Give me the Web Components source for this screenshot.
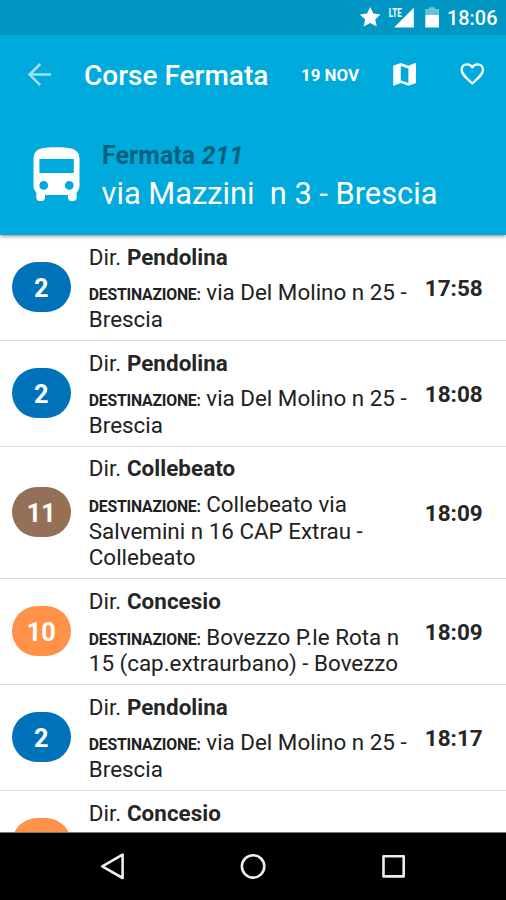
<!DOCTYPE html>
<html lang="it">
<head>
<meta charset="utf-8">
<title>Corse Fermata</title>
<style>
html,body{margin:0;padding:0}
body{width:506px;height:900px;overflow:hidden;background:#fff;font-family:Roboto,"Noto Sans",sans-serif;color:#212121}
</style>
</head>
<body>
<transit-app></transit-app>
<script>
const define=(name,html)=>customElements.define(name,class extends HTMLElement{
  constructor(){
    super();
    const t=document.createElement('template');
    t.innerHTML=html;
    this.attachShadow({mode:'open'}).append(t.content.cloneNode(true));
  }
});

define('status-bar',`
<style>
:host{display:flex;box-sizing:border-box;height:35px;background:#0097c4;color:#fff;align-items:center;justify-content:flex-end;padding-right:8px}
svg{display:block;flex:none}
span{font-size:19.9px;line-height:35px;font-weight:500;width:51px;white-space:nowrap;padding-top:2px}
</style>
<svg width="92" height="35" viewBox="355 0 92 35">
  <path fill="#fff" d="M370.2 7l3.1 6.600 7.200 1-5.300 4.800 1.600 7.200-6.600-3.700-6.600 3.700 1.600-7.200-5.300-4.800 7.200-1z"/>
  <text x="388.700" y="17" font-size="12.200" font-weight="700" fill="#fff" textLength="13" lengthAdjust="spacingAndGlyphs">LTE</text>
  <path fill="#fff" d="M413.8 7.800v19.800h-19.800z"/>
  <path fill="#66c1dd" d="M425.3 9h3.600V7.300h6.100V9h4v6h-13.700z"/>
  <path fill="#fff" d="M425.3 15H439v12.500h-13.700z"/>
</svg>
<span>18:06</span>`);

define('app-toolbar',`
<style>
:host{display:flex;height:80px;align-items:center;color:#fff}
svg{display:block;flex:none}
h1{margin:0;font-size:28px;font-weight:500;width:217px;line-height:36px;white-space:nowrap;padding-top:2px}
time{font-size:16.900px;font-weight:700;width:81px;line-height:24px;white-space:nowrap}
</style>
<svg width="84" height="80" viewBox="0 35 84 80"><path d="M51 74.600H29.800M40.200 64L29.600 74.600l10.600 10.600" fill="none" stroke="#a6e0f4" stroke-width="2.500"/></svg>
<h1>Corse Fermata</h1>
<time>19 NOV</time>
<svg width="124" height="80" viewBox="382 35 124 80">
  <path fill="#fff" fill-rule="evenodd" d="M415.400 63l-.2.1-6.800 2.600-7.600-2.700-7.100 2.400c-.3.1-.5.3-.5.6v19.100c0 .4.3.6.6.6l.2-.1 6.800-2.500 7.600 2.600 7.100-2.400c.3-.1.5-.3.5-.6V63.600c0-.4-.3-.6-.6-.6zm-7 20.100l-7.600-2.700V65.900l7.600 2.700z"/>
  <path fill="none" stroke="#fff" stroke-width="2.300" stroke-linejoin="round" d="M472.300 83.400l-1.600-1.400C465.200 77 461.600 73.800 461.600 69.800c0-3.100 2.400-5.500 5.500-5.500 2.100 0 4.200 1.200 5.200 3.100 1-1.900 3.100-3.100 5.200-3.100 3.100 0 5.500 2.400 5.500 5.500 0 4-3.600 7.200-9.100 12.200z"/>
</svg>`);

define('stop-banner',`
<style>
:host{display:flex;height:120px;color:#fff}
svg{display:block;flex:none}
div{padding-top:24px}
p{margin:0;white-space:pre}
.k{font-size:24.900px;line-height:34px;font-weight:700;color:#00617e}
.n{font-size:30.800px;line-height:41px;margin-left:-.5px}
::slotted(span){letter-spacing:.1px}
</style>
<svg width="102" height="119" viewBox="0 115 102 119"><path fill="#fff" fill-rule="evenodd" d="M56.500 147.300c-15.500 0-23 1.800-23 11.500v27.300c0 2.500 1.100 4.700 2.800 6.300v5.200c0 1.900 1.200 3.500 3.200 3.500h2.300c2 0 3.200-1.600 3.200-3.500v-2.500h23v2.500c0 1.900 1.200 3.500 3.200 3.500h2.300c2 0 3.200-1.600 3.200-3.500v-5.200c1.700-1.600 2.800-3.800 2.800-6.300v-27.300c0-9.700-8.500-11.500-23-11.500zM39.400 159h34.400v14H39.400zM43.700 181a4.400 4.400 0 1 1 0 8.800a4.400 4.400 0 0 1 0-8.800zM69.300 181a4.400 4.400 0 1 1 0 8.800a4.400 4.400 0 0 1 0-8.800z"/></svg>
<div><p class="k"><slot name="code"></slot></p><p class="n"><slot></slot></p></div>`);

define('trip-row',`
<style>
:host{display:grid;grid-template-columns:88.800px 323px 94px;box-sizing:border-box;border-bottom:1.500px solid #dcdcdc;height:105.900px;flex:none}
.badge{align-self:center;margin-left:11.700px;margin-bottom:1px;width:59.300px;height:49.500px;border-radius:25px;background:var(--line,#0072b9);color:#fff;font-weight:700;font-size:25.300px;line-height:53.500px;text-align:center}
.text{padding-top:8.700px;font-size:22.400px;line-height:26.500px}
.dir{height:26px;margin-bottom:9.700px;white-space:nowrap;letter-spacing:.05px}
.dir b{color:#262626}
.label{font-size:15.800px;font-weight:700;line-height:16px;letter-spacing:-.22px}
.time{align-self:center;font-size:22.500px;font-weight:700;color:#262626;padding:1px 0 0 13px;line-height:28px}
</style>
<div class="badge"><slot name="line"></slot></div>
<div class="text"><div class="dir">Dir. <b><slot name="dir"></slot></b></div><div><span class="label">DESTINAZIONE:</span> <slot></slot></div></div>
<div class="time"><slot name="time"></slot></div>`);

define('nav-bar',`
<style>:host{display:block;height:67px;background:#000;border-top:1px solid #777}svg{display:block}</style>
<svg width="506" height="67" viewBox="0 833 506 67" fill="none" stroke="#eee" stroke-width="2.600" stroke-linejoin="round">
  <path d="M122.600 854.700v23.300l-20.300-11.600z"/><circle cx="253.100" cy="866.400" r="11.200"/><rect x="383.500" y="856.200" width="20.200" height="20.200"/>
</svg>`);

define('transit-app',`
<style>
:host{display:flex;flex-direction:column;width:506px;height:900px}
header{background:#00aadd;height:200px;flex:none;box-shadow:0 1px 4px rgba(0,0,0,.5);clip-path:inset(0 0 -8px 0);z-index:1}
status-bar,nav-bar{flex:none}
main{flex:1;overflow:hidden;display:flex;flex-direction:column;min-height:0}
.three{height:132.400px}
</style>
<status-bar></status-bar>
<header>
  <app-toolbar></app-toolbar>
  <stop-banner><span slot="code">Fermata <i>211</i></span>via Mazzini&nbsp; n 3 - Brescia</stop-banner>
</header>
<main>
  <trip-row><span slot="line">2</span><span slot="dir">Pendolina</span>via Del Molino n 25 - Brescia<span slot="time">17:58</span></trip-row>
  <trip-row><span slot="line">2</span><span slot="dir">Pendolina</span>via Del Molino n 25 - Brescia<span slot="time">18:08</span></trip-row>
  <trip-row class="three" style="--line:#937056"><span slot="line">11</span><span slot="dir">Collebeato</span>Collebeato via Salvemini n 16 CAP Extrau - Collebeato<span slot="time">18:09</span></trip-row>
  <trip-row style="--line:#ff9248"><span slot="line">10</span><span slot="dir">Concesio</span>Bovezzo P.le Rota n 15 (cap.extraurbano) - Bovezzo<span slot="time">18:09</span></trip-row>
  <trip-row><span slot="line">2</span><span slot="dir">Pendolina</span>via Del Molino n 25 - Brescia<span slot="time">18:17</span></trip-row>
  <trip-row style="--line:#ff9248"><span slot="line">10</span><span slot="dir">Concesio</span></trip-row>
</main>
<nav-bar></nav-bar>`);
</script>
</body>
</html>
